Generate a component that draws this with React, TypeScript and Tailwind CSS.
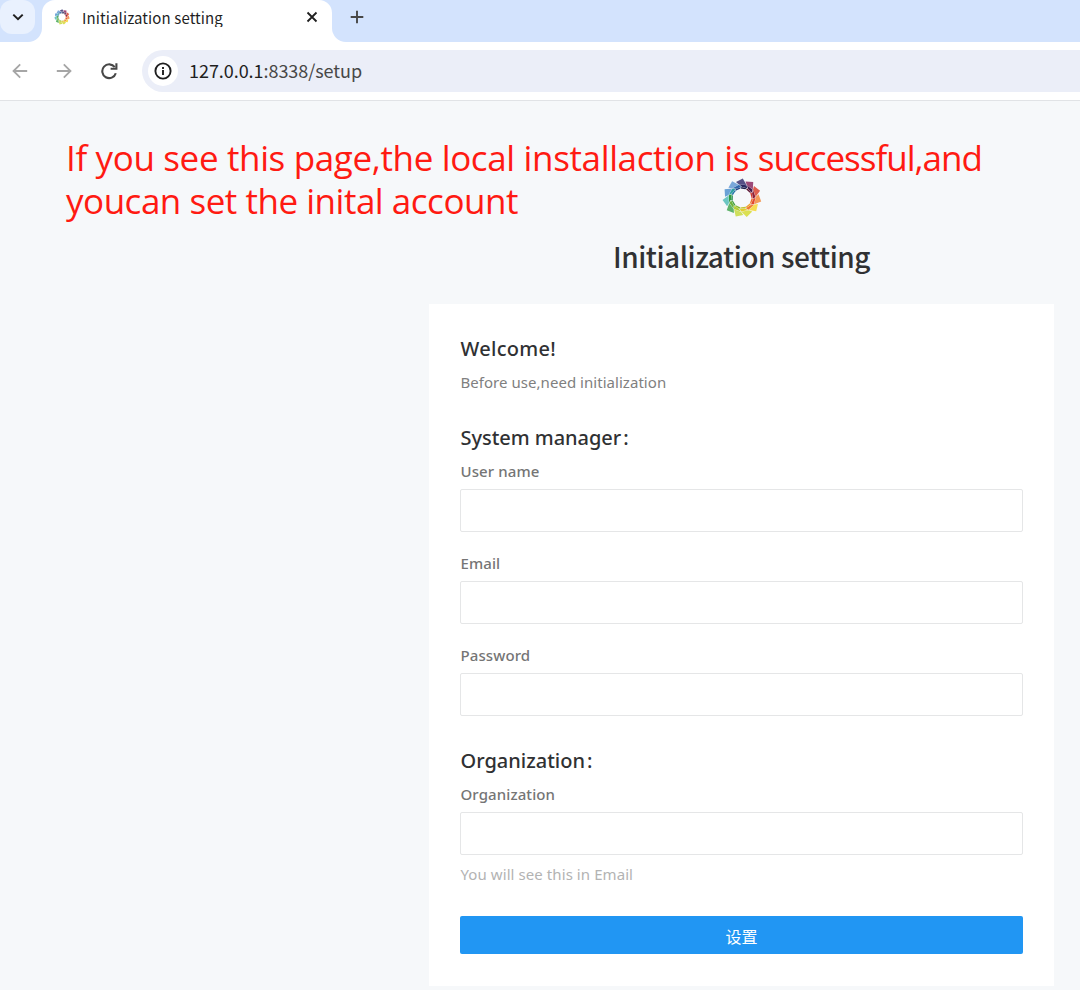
const blades: [string, string, string][] = [
  ["#565086", "#2a2a62", "#1f1f4a"],
  ["#9c4a78", "#4a1c4c", "#5c1430"],
  ["#de5f4e", "#8c1f38", "#d43a2c"],
  ["#f39a58", "#e2482c", "#ee6a2a"],
  ["#f6dc50", "#f07a2c", "#f0a028"],
  ["#dbe052", "#e2cc30", "#c2c42e"],
  ["#cfdf5c", "#b8cc32", "#86b52e"],
  ["#5fb36a", "#6cb23a", "#3e9c3c"],
  ["#6cc6c2", "#2f9a42", "#1f8a44"],
  ["#6aa2d6", "#2f9fa2", "#1f6fa6"],
  ["#7aa8da", "#2f66aa", "#1f3f80"],
];

function Logo({ className }: { className: string }) {
  return (
    <svg viewBox="-20 -20 40 40" className={className} aria-hidden="true">
      {blades.map(([outer, middle, inner], i) => (
        <g key={i} transform={`rotate(${(i * 360) / 11})`}>
          <path d="M.8-19.500-6-15.900-3.100-13.600 4.500-13Z" fill={outer} />
          <path d="M-2.700-13.400 4.600-12.700 5.200-9.700 0-11.100Z" fill={middle} />
          <path d="M-.5-11 4.900-9.500 3.300-8.800-1.300-9.600Z" fill={inner} />
        </g>
      ))}
    </svg>
  );
}

function TabStrip() {
  return (
    <div className="flex h-[42px] bg-white">
      <div className="h-[42px] w-[42px] rounded-br-[14px] bg-[#d3e3fd]">
        <div className="flex h-[34px] w-[35px] items-center justify-center rounded-[12px] bg-[#e9f1fe]">
          <svg viewBox="0 0 12 12" className="h-3 w-3" fill="none" stroke="#1f1f1f" strokeWidth="2">
            <path d="M1.300 3.600 6 8.200l4.700-4.600" />
          </svg>
        </div>
      </div>
      <div className="w-[290px] bg-[linear-gradient(#d3e3fd_0_20px,#fff_20px)]">
        <div className="flex h-[42px] items-start rounded-t-[13px] bg-white pl-[12px]">
          <Logo className="mt-[9px] h-4 w-4" />
          <span className="ml-[12px] mt-[7px] h-5 w-[224px] overflow-hidden whitespace-nowrap font-['Noto_Sans_CJK_SC',sans-serif] text-[15px] leading-[21px] tracking-[0.11px] text-[#1f1f1f]">
            Initialization setting
          </span>
          <svg viewBox="0 0 12 12" className="mr-[14px] mt-[11px] h-3 w-3 shrink-0" fill="none" stroke="#1f1f1f" strokeWidth="1.800">
            <path d="m1.500 1.500 9 9m0-9-9 9" />
          </svg>
        </div>
      </div>
      <div className="flex-1 rounded-bl-[14px] bg-[#d3e3fd]">
        <svg viewBox="0 0 14 14" className="ml-[18px] mt-[10px] h-3.5 w-3.5" fill="none" stroke="#474747" strokeWidth="1.900">
          <path d="M7 .7v12.600M.7 7h12.600" />
        </svg>
      </div>
    </div>
  );
}

function Toolbar() {
  return (
    <div className="flex h-[59px] border-b border-[#e1e3e6] bg-white pt-2">
      <div className="flex h-[42px] w-[142px] shrink-0 items-center pl-[12px]">
        <svg viewBox="0 0 16 16" className="h-4 w-4" fill="none" stroke="#a6a6a6" strokeWidth="1.800">
          <path d="M15.200 8H1.700M8.200 1.300 1.500 8l6.700 6.700" />
        </svg>
        <svg viewBox="0 0 16 16" className="ml-[28px] h-4 w-4" fill="none" stroke="#a6a6a6" strokeWidth="1.800">
          <path d="M.8 8h13.500M7.800 1.300 14.500 8l-6.700 6.700" />
        </svg>
        <svg viewBox="0 0 18 18" className="ml-[28px] h-[18px] w-[18px]" fill="none" stroke="#474747" strokeWidth="2.100">
          <path d="M15.800 11.200A6.900 6.900 0 1 1 14.800 5.200" />
          <path d="M16.400 1.200v5.600H10.600" />
        </svg>
      </div>
      <div className="flex h-[42px] flex-1 items-center rounded-l-full bg-[#ebeef8] pl-[6px]">
        <div className="flex h-[30px] w-[30px] items-center justify-center rounded-full bg-white">
          <svg viewBox="0 0 18 18" className="h-[18px] w-[18px]" fill="none" stroke="#1f1f1f" strokeWidth="1.900">
            <circle cx="9" cy="9" r="7.600" />
            <path d="M9 8v5M9 5v1.900" />
          </svg>
        </div>
        <span className="mb-[2px] ml-[11px] whitespace-nowrap font-['Noto_Sans_CJK_SC',sans-serif] text-[18px] leading-[40px] tracking-[-0.05px] text-[#1f1f1f]">
          127.0.0.1<span className="text-[#474747]">:8338/setup</span>
        </span>
      </div>
    </div>
  );
}

function Heading({ children, className }: { children: React.ReactNode; className: string }) {
  return (
    <h2 className={`h-7 whitespace-nowrap pl-[0.5px] font-['Noto_Sans',sans-serif] text-[20px] font-medium leading-[30px] text-[#303133] ${className}`}>
      {children}
    </h2>
  );
}

function Field({ label, type, className }: { label: string; type: string; className: string }) {
  return (
    <label className={`block ${className}`}>
      <span className="block h-5 pl-[0.5px] font-['Noto_Sans',sans-serif] text-[15px] font-medium leading-5 tracking-[0.1px] text-[#757575]">{label}</span>
      <input type={type} className="mt-2 block h-[43px] w-full rounded-[2px] border border-[#e5e6e7] bg-white px-3 outline-none" />
    </label>
  );
}

export default function App() {
  return (
    <div className="flex h-[990px] w-[1080px] flex-col overflow-hidden bg-[#f6f8fa]">
      <TabStrip />
      <Toolbar />
      <main className="relative flex-1">
        <p className="absolute left-[66px] top-[35px] whitespace-nowrap font-['Open_Sans',sans-serif] text-[35px] leading-[43px] text-[#ff1a12]">
          <span className="tracking-[-0.36px]">If you see this page,the local installaction is </span>
          <span className="tracking-[-1px]">successful,and</span>
          <br />
          <span className="tracking-[-0.48px]">youcan set the inital account</span>
        </p>
        <div className="ml-[429px] flex w-[625px] flex-col items-center pt-[77px]">
          <Logo className="h-10 w-10" />
          <h1 className="mt-[18px] h-10 whitespace-nowrap font-['Noto_Sans_CJK_SC',sans-serif] text-[28px] font-medium leading-10 tracking-[-0.45px] text-[#303133]">
            Initialization setting
          </h1>
          <form className="mt-[28px] h-[682px] w-full bg-white px-[31px] pt-[30px]" onSubmit={(e) => e.preventDefault()}>
            <Heading className="tracking-[0.3px]">Welcome!</Heading>
            <p className="mt-[10px] h-5 pl-[0.5px] font-['Noto_Sans',sans-serif] text-[15px] leading-5 tracking-[0.04px] text-[#808080]">
              Before use,need initialization
            </p>
            <Heading className="mt-[31px] tracking-[-0.04px]">
              System manager<span className="ml-[2px]">:</span>
            </Heading>
            <Field className="mt-[10px]" label="User name" type="text" />
            <Field className="mt-[21px]" label="Email" type="email" />
            <Field className="mt-[21px]" label="Password" type="password" />
            <Heading className="mt-[30px]">
              Organization<span className="ml-[2px]">:</span>
            </Heading>
            <Field className="mt-[10px]" label="Organization" type="text" />
            <p className="mt-[9px] h-5 pl-[0.5px] font-['Noto_Sans',sans-serif] text-[15px] leading-5 tracking-[0.08px] text-[#b3b3b3]">
              You will see this in Email
            </p>
            <button className="mt-[32px] block h-[38px] w-full rounded-[2px] bg-[#2196f3] pt-[2px] font-['Noto_Sans_CJK_SC',sans-serif] text-[16px] leading-[36px] text-white">
              设置
            </button>
          </form>
        </div>
      </main>
    </div>
  );
}
